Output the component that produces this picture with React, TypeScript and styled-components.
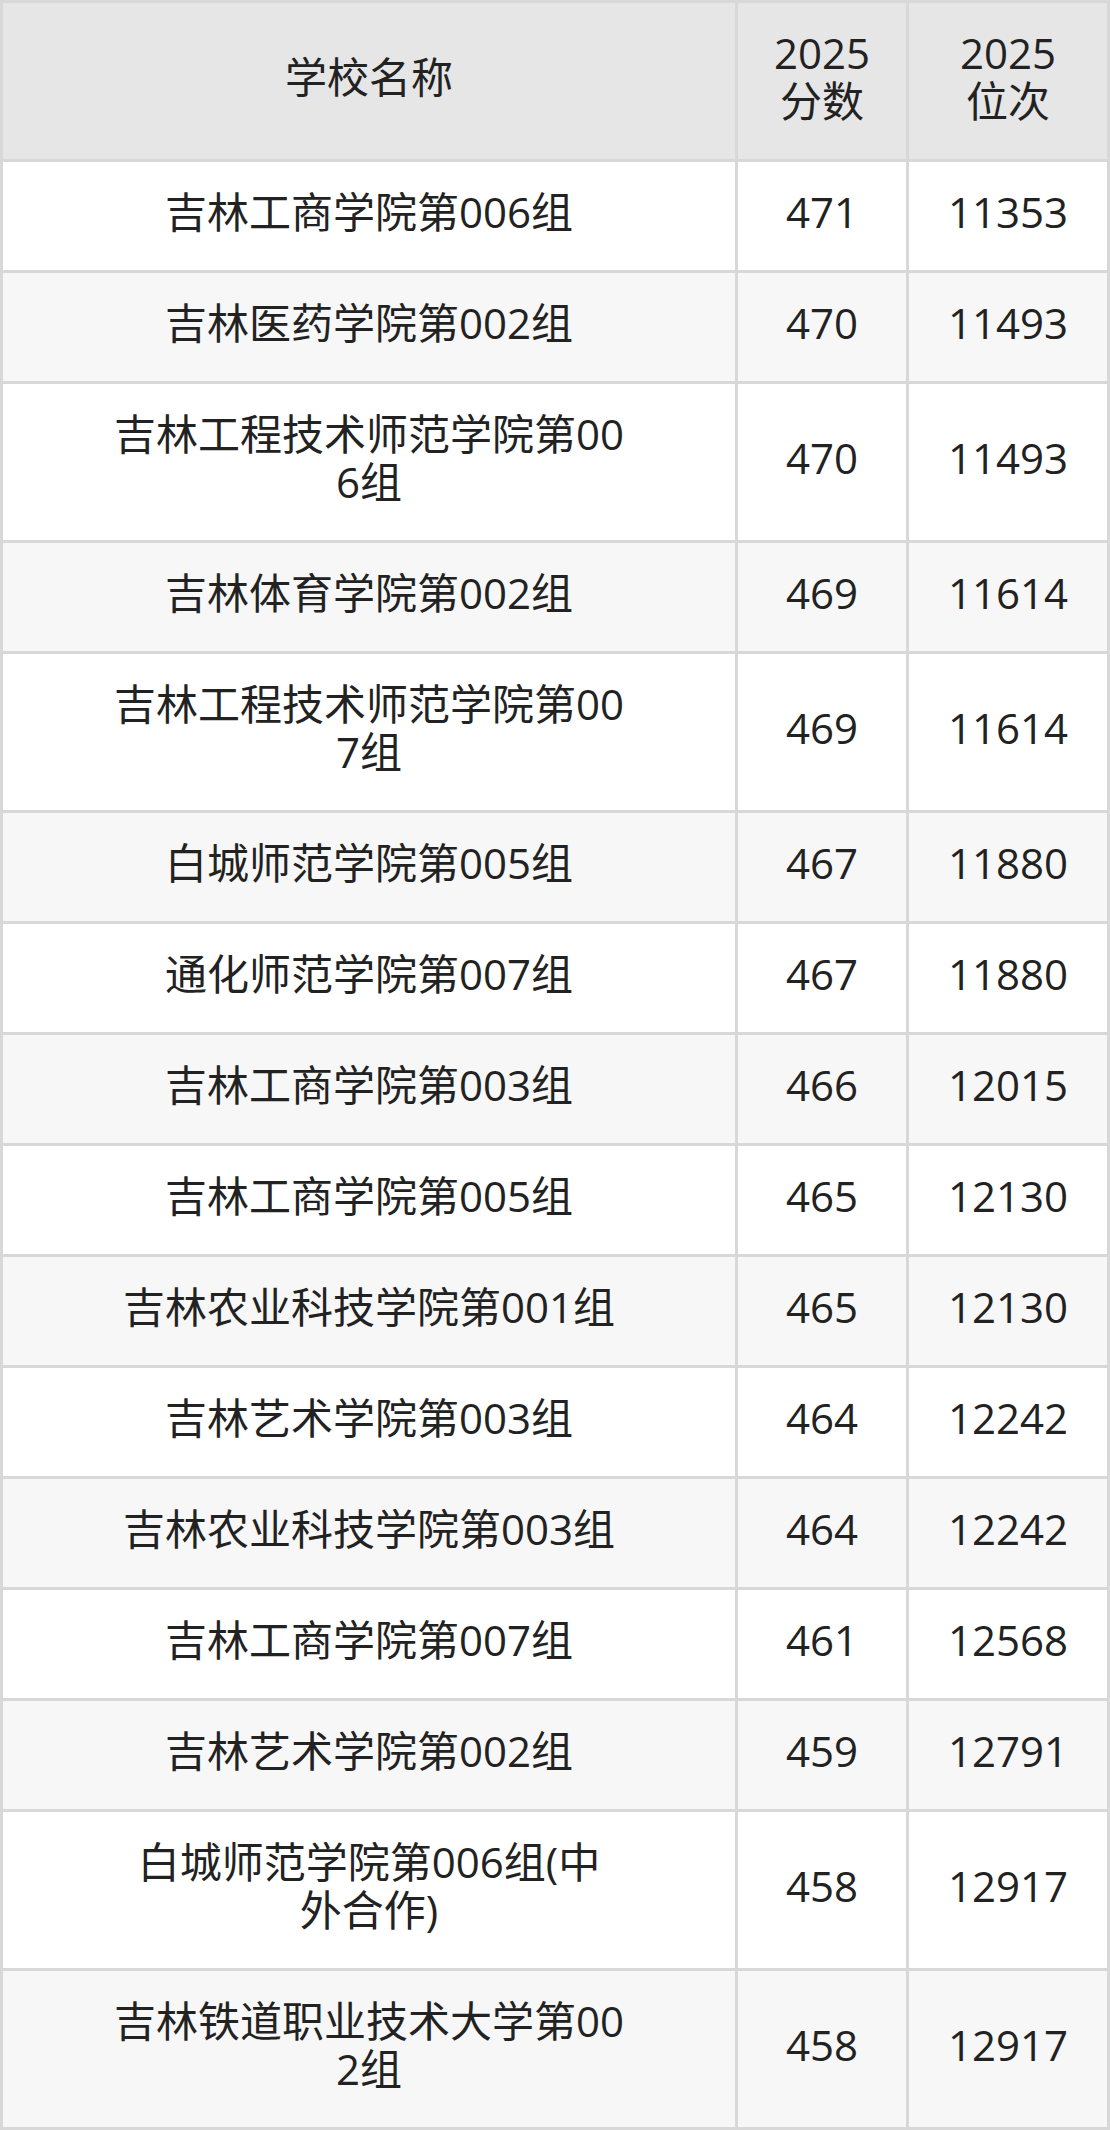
import React from 'react';
import styled, { createGlobalStyle } from 'styled-components';

const GlobalStyle = createGlobalStyle`
  body {
    margin: 0;
    background: #fff;
  }
`;

type Row = { name: string; score: number; rank: number };

const rows: Row[] = [
  { name: '吉林工商学院第006组', score: 471, rank: 11353 },
  { name: '吉林医药学院第002组', score: 470, rank: 11493 },
  { name: '吉林工程技术师范学院第006组', score: 470, rank: 11493 },
  { name: '吉林体育学院第002组', score: 469, rank: 11614 },
  { name: '吉林工程技术师范学院第007组', score: 469, rank: 11614 },
  { name: '白城师范学院第005组', score: 467, rank: 11880 },
  { name: '通化师范学院第007组', score: 467, rank: 11880 },
  { name: '吉林工商学院第003组', score: 466, rank: 12015 },
  { name: '吉林工商学院第005组', score: 465, rank: 12130 },
  { name: '吉林农业科技学院第001组', score: 465, rank: 12130 },
  { name: '吉林艺术学院第003组', score: 464, rank: 12242 },
  { name: '吉林农业科技学院第003组', score: 464, rank: 12242 },
  { name: '吉林工商学院第007组', score: 461, rank: 12568 },
  { name: '吉林艺术学院第002组', score: 459, rank: 12791 },
  { name: '白城师范学院第006组(中外合作)', score: 458, rank: 12917 },
  { name: '吉林铁道职业技术大学第002组', score: 458, rank: 12917 },
];

// names are wrapped every 13 characters, like the source table
const splitName = (name: string) => name.match(/.{1,13}/g) ?? [name];

const StyledTable = styled.table`
  width: 1110px;
  box-sizing: border-box;
  table-layout: fixed;
  border-collapse: separate;
  border-spacing: 0;
  border-top: 3px solid #d8d8d8;
  border-left: 3px solid #d8d8d8;
  font-family: 'Open Sans', 'Noto Sans CJK SC', sans-serif;
  font-size: 42px;
  line-height: 48px;
  color: #222;
`;

const StyledRow = styled.tr<{ $striped?: boolean }>`
  background: ${(p) => (p.$striped ? '#f7f7f7' : '#fff')};
`;

const StyledHeadCell = styled.th<{ $width: number }>`
  width: ${(p) => p.$width}px;
  box-sizing: border-box;
  padding: 26px 0 34px;
  background: #e6e6e6;
  font-weight: normal;
  text-align: center;
  vertical-align: middle;
  border-right: 3px solid #d8d8d8;
  border-bottom: 3px solid #d8d8d8;
`;

const StyledCell = styled.td`
  box-sizing: border-box;
  padding: 26px 0 34px;
  text-align: center;
  vertical-align: middle;
  white-space: nowrap;
  border-right: 3px solid #d8d8d8;
  border-bottom: 3px solid #d8d8d8;
`;

function App() {
  return (
    <>
      <GlobalStyle />
      <StyledTable>
        <thead>
          <tr>
            <StyledHeadCell $width={735}>学校名称</StyledHeadCell>
            <StyledHeadCell $width={171}>
              2025
              <br />
              分数
            </StyledHeadCell>
            <StyledHeadCell $width={201}>
              2025
              <br />
              位次
            </StyledHeadCell>
          </tr>
        </thead>
        <tbody>
          {rows.map((row, i) => (
            <StyledRow key={row.name} $striped={i % 2 === 1}>
              <StyledCell>
                {splitName(row.name).map((part, j) => (
                  <React.Fragment key={j}>
                    {j > 0 && <br />}
                    {part}
                  </React.Fragment>
                ))}
              </StyledCell>
              <StyledCell>{row.score}</StyledCell>
              <StyledCell>{row.rank}</StyledCell>
            </StyledRow>
          ))}
        </tbody>
      </StyledTable>
    </>
  );
}

export default App;
